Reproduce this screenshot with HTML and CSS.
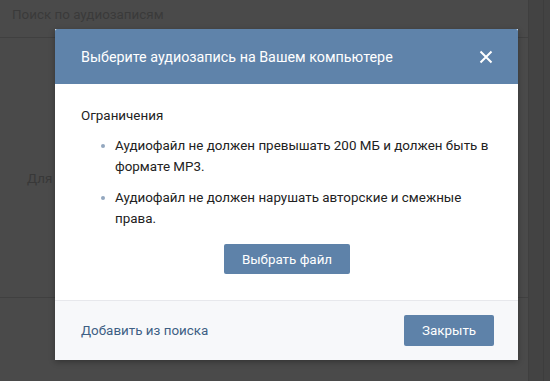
FILE: index.html
```html
<!DOCTYPE html>
<html lang="ru">
<head>
  <meta charset="UTF-8">
  <title>Аудиозаписи</title>
  <link rel="stylesheet" href="styles.css">
</head>
<body>
  <div class="page">
    <div class="search">Поиск по аудиозаписям</div>
    <div class="empty">Для</div>
  </div>
  <div class="side"></div>

  <div class="box">
    <div class="box-title">
      <span>Выберите аудиозапись на Вашем компьютере</span>
      <svg class="close" width="14" height="14" viewBox="0 0 14 14">
        <path d="M1.5 1.5 L12.5 12.5 M12.5 1.5 L1.5 12.5" stroke="#fff" stroke-width="2" fill="none"/>
      </svg>
    </div>
    <div class="box-body">
      <div class="limits">Ограничения</div>
      <ul>
        <li>Аудиофайл не должен превышать 200 МБ и должен быть в формате MP3.</li>
        <li>Аудиофайл не должен нарушать авторские и смежные права.</li>
      </ul>
      <div class="center">
        <button class="btn">Выбрать файл</button>
      </div>
    </div>
    <div class="box-footer">
      <a class="link" href="#">Добавить из поиска</a>
      <button class="btn">Закрыть</button>
    </div>
  </div>
</body>
</html>
```

FILE: styles.css
```css
body {
  margin: 0;
  background-color: #434343;
  font-family: Roboto, "Open Sans", sans-serif;
  font-size: 13.4px;
  color: #222;
  width: 550px;
  height: 381px;
  overflow: hidden;
  display: flex;
}

.page {
  width: 528px;
  height: 381px;
  background-color: #4a4a4a;
  border-right: 1px solid #3f3f3f;
}

.search {
  height: 37px;
  line-height: 30px;
  padding-left: 12px;
  color: #3a3a3a;
  border-bottom: 1px solid #404040;
}

.empty {
  height: 260px;
  border-bottom: 1px solid #404040;
  color: #383838;
  padding: 133px 0 0 27px;
  box-sizing: border-box;
}

.side {
  width: 14px;
  border-right: 1px solid #3d3d3d;
}

.box {
  position: absolute;
  left: 55px;
  top: 29px;
  width: 463px;
  background-color: #fff;
  box-shadow: 0 2px 6px rgba(0, 0, 0, 0.3);
}

.box-title {
  height: 55px;
  background-color: #5f83aa;
  color: #fff;
  font-size: 14.3px;
  display: flex;
  align-items: center;
  justify-content: space-between;
  padding: 0 25px 0 26px;
  border-radius: 2px 2px 0 0;
}

.box-body {
  padding: 23px 25px 26px 26px;
}

.limits {
  line-height: 18px;
  margin-bottom: 10px;
}

ul {
  margin: 0;
  padding: 0 0 0 34px;
  list-style: none;
}

li {
  line-height: 21px;
  margin-bottom: 10px;
  position: relative;
}

li::before {
  content: "";
  position: absolute;
  left: -14px;
  top: 9px;
  width: 4px;
  height: 4px;
  border-radius: 50%;
  background-color: #93a7bf;
}

.center {
  text-align: center;
  padding-top: 5px;
}

.btn {
  font-family: Roboto, "Open Sans", sans-serif;
  font-size: 13.4px;
  color: #fff;
  background-color: #5e82a9;
  border: none;
  border-radius: 2px;
  height: 30px;
  padding: 0 18px;
}

.box-footer {
  height: 59px;
  background-color: #f7f8fa;
  border-top: 1px solid #e7e8ec;
  display: flex;
  align-items: center;
  justify-content: space-between;
  padding: 0 24px 0 26px;
}

.box-footer .btn {
  width: 90px;
  height: 31px;
}

.link {
  color: #3e5f84;
  text-decoration: none;
}
```
